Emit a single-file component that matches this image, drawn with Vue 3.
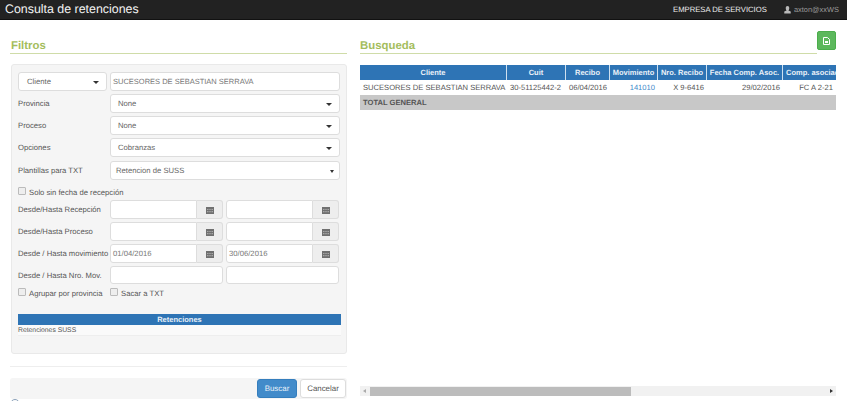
<script setup>
const rows = [
  { label: 'Provincia', value: 'None' },
  { label: 'Proceso', value: 'None' },
  { label: 'Opciones', value: 'Cobranzas' }
]
const dates = [
  { label: 'Desde/Hasta Recepción', a: '', b: '' },
  { label: 'Desde/Hasta Proceso', a: '', b: '' },
  { label: 'Desde / Hasta movimiento', a: '01/04/2016', b: '30/06/2016' }
]
const cols = [
  { name: 'Cliente', w: 147 },
  { name: 'Cuit', w: 59 },
  { name: 'Recibo', w: 44 },
  { name: 'Movimiento', w: 48 },
  { name: 'Nro. Recibo', w: 49 },
  { name: 'Fecha Comp. Asoc.', w: 76 },
  { name: 'Comp. asociado', w: 53 }
]
</script>

<template>
  <div class="page">
    <header class="topbar">
      <span class="title">Consulta de retenciones</span>
      <span class="company">EMPRESA DE SERVICIOS</span>
      <span class="user">
        <svg width="7" height="8" viewBox="0 0 8 9"><path d="M4 0C2.7 0 2 1 2 2.4 2 3.6 2.6 4.6 3 5L.3 6.3V8.5h7.4V6.3L5 5c.4-.4 1-1.4 1-2.6C6 1 5.3 0 4 0z" fill="#b8b8b8"/></svg>
        axton@xxWS
      </span>
    </header>
    <main class="content">
      <section class="left">
        <h2 class="heading">Filtros</h2>
        <div class="panel">
          <div class="row first">
            <div class="ctl pick">Cliente<i class="caret"></i></div>
            <div class="ctl grow plain upper">SUCESORES DE SEBASTIAN SERRAVA</div>
          </div>
          <div v-for="r in rows" :key="r.label" class="row">
            <label class="lab">{{ r.label }}</label>
            <div class="ctl grow sel">{{ r.value }}<i class="caret"></i></div>
          </div>
          <div class="row tpl">
            <label class="lab">Plantillas para TXT</label>
            <div class="ctl grow sel2">Retencion de SUSS<i class="caret small"></i></div>
          </div>
          <label class="check solo"><i class="box"></i>Solo sin fecha de recepción</label>
          <div v-for="d in dates" :key="d.label" class="row date">
            <label class="lab">{{ d.label }}</label>
            <div class="pair">
              <div v-for="v in [d.a, d.b]" class="dategroup">
                <div class="ctl dinput plain">{{ v }}</div>
                <div class="addon">
                  <svg width="8" height="8" viewBox="0 0 8 8"><path d="M0 1h8v7H0z" fill="#707070"/><path d="M1 3h1.5v1H1zM3.3 3h1.4v1H3.3zM5.5 3H7v1H5.5zM1 5h1.5v1.2H1zM3.3 5h1.4v1.2H3.3zM5.5 5H7v1.2H5.5z" fill="#a8a8a8"/></svg>
                </div>
              </div>
            </div>
          </div>
          <div class="row nro">
            <label class="lab">Desde / Hasta Nro. Mov.</label>
            <div class="pair">
              <div class="ctl half"></div>
              <div class="ctl half"></div>
            </div>
          </div>
          <div class="checks">
            <label class="check agr"><i class="box"></i>Agrupar por provincia</label>
            <label class="check"><i class="box"></i>Sacar a TXT</label>
          </div>
          <div class="ret">
            <div class="rethead">Retenciones</div>
            <div class="retrow">Retenciones SUSS</div>
          </div>
        </div>
        <hr class="sep" />
        <div class="actions">
          <button class="btn primary">Buscar</button>
          <button class="btn">Cancelar</button>
        </div>
        <div class="dot"></div>
      </section>
      <section class="right">
        <div class="headrow">
          <h2 class="heading busq">Busqueda</h2>
          <button class="xls">
            <svg width="7" height="8" viewBox="0 0 7 8"><path d="M.5.5h4l2 2v5h-6z" fill="none" stroke="#fff"/><path d="M2 4h3v2H2z" fill="#fff"/></svg>
          </button>
        </div>
        <div class="tablewrap">
          <div class="tr thead">
            <div v-for="c in cols" :key="c.name" class="th" :style="{ width: c.w + 'px' }">{{ c.name }}</div>
          </div>
          <div class="tr body">
            <div class="td" style="width:147px">SUCESORES DE SEBASTIAN SERRAVA</div>
            <div class="td" style="width:59px">30-51125442-2</div>
            <div class="td" style="width:44px">06/04/2016</div>
            <div class="td end link" style="width:48px">141010</div>
            <div class="td end" style="width:49px">X 9-6416</div>
            <div class="td end" style="width:76px">29/02/2016</div>
            <div class="td end" style="width:53px">FC A 2-21</div>
          </div>
          <div class="total">TOTAL GENERAL</div>
        </div>
        <div class="scroll">
          <span class="arr l"></span>
          <div class="thumb"></div>
          <span class="arr r"></span>
        </div>
      </section>
    </main>
  </div>
</template>

<style>
html, body { margin: 0; background: #fff; overflow: hidden; }
</style>

<style scoped>
.page { width: 847px; height: 401px; overflow: hidden; font-family: "Liberation Sans", Arial, sans-serif; font-size: 7.7px; color: #555; position: relative; text-rendering: geometricPrecision; }
.topbar { height: 19px; background: #222; border-bottom: 1px solid #111; display: flex; align-items: center; padding: 0 0 0 5px; color: #fff; }
.title { font-size: 12.4px; color: #f2f2f2; margin-right: auto; line-height: 15px; }
.company { font-size: 7.7px; color: #eee; width: 111px; }
.user { font-size: 7.4px; color: #999; width: 63px; display: flex; align-items: center; gap: 3px; white-space: nowrap; }
.content { display: flex; padding-left: 10px; }
.left { width: 337px; }
.right { width: 476px; margin-left: 13px; }
.heading { margin: 0; font-size: 11.4px; font-weight: bold; color: #a4bd5c; height: 14px; line-height: 14px; padding-top: 19px; border-bottom: 1px solid #cfdca8; padding-left: 1px; }
.busq { padding-left: 0; margin-right: 19px; }
.panel { box-sizing: border-box; margin-top: 10px; margin-left: 1px; width: 336px; height: 290px; background: #f5f5f5; border: 1px solid #e9e9e9; border-radius: 3px; padding: 7px 6px 0 6px; }
.row { display: flex; align-items: center; height: 19px; margin-bottom: 3px; }
.row.first { height: 19px; margin-bottom: 3px; gap: 3px; }
.row.tpl { margin-top: 4px; margin-bottom: 0; height: 19px; }
.row.date { height: 19px; margin-bottom: 3px; }
.row.nro { height: 18px; margin-bottom: 0; }
.lab { width: 92px; flex: none; color: #555; white-space: nowrap; }
.ctl { box-sizing: border-box; height: 100%; background: #fff; border: 1px solid #ddd; border-radius: 3px; display: flex; align-items: center; color: #666; position: relative; }
.pick { width: 89px; padding-left: 8px; flex: none; }
.grow { flex: 1; }
.plain { padding-left: 2px; color: #777; }
.upper { font-size: 7.5px; }
.sel { padding-left: 7px; }
.sel2 { padding-left: 5px; }
.caret { position: absolute; right: 7px; top: 8px; border: 3px solid transparent; border-top-color: #333; border-bottom: 0; }
.caret.small { border-width: 3px 2px 0; right: 5px; }
.check { display: flex; align-items: center; gap: 3px; color: #555; height: 12px; }
.solo { margin-top: 6px; margin-bottom: 2px; }
.box { width: 6px; height: 6px; border: 1px solid #bbb; border-radius: 1px; background: #eee; margin-bottom: 2px; }
.pair { display: flex; gap: 3px; flex: 1; height: 100%; }
.dategroup { display: flex; width: 113px; height: 100%; }
.dinput { flex: 1; border-radius: 3px 0 0 3px; }
.addon { width: 26px; box-sizing: border-box; background: #eee; border: 1px solid #ddd; border-left: 0; border-radius: 0 3px 3px 0; display: flex; align-items: center; justify-content: center; }
.half { width: 113px; }
.checks { display: flex; margin-top: 3px; }
.agr { width: 92px; }
.ret { margin-top: 15px; }
.rethead { height: 11px; line-height: 11px; background: #2e74b5; color: #e9f0f7; font-weight: bold; text-align: center; font-size: 7.5px; width: 323px; }
.retrow { height: 11px; line-height: 11px; background: #fafafa; border-bottom: 1px solid #eee; font-size: 6.8px; color: #555; width: 323px; box-sizing: border-box; }
.sep { margin: 12px 0 0 0; border: 0; border-top: 1px solid #eee; }
.actions { margin-top: 11px; background: #f5f5f5; height: 21px; display: flex; justify-content: flex-end; align-items: flex-start; gap: 3px; padding-right: 1px; border-radius: 3px; }
.btn { box-sizing: border-box; height: 19px; padding: 0; width: 46px; margin-top: 1px; background: #fff; border: 1px solid #ddd; border-radius: 3px; font: 7.9px "Liberation Sans", Arial, sans-serif; text-rendering: geometricPrecision; color: #555; }
.primary { width: 40px; background: #428bca; border-color: #357ebd; color: #eaf2f9; }
.dot { width: 10px; height: 10px; border-radius: 50%; border: 1px solid #8aa0b8; box-sizing: border-box; margin: 0; }
.headrow { position: relative; }
.xls { position: absolute; right: 0; top: 11px; width: 19px; height: 19px; padding: 0; background: #5cb85c; border: 1px solid #4cae4c; border-radius: 2px; display: flex; align-items: center; justify-content: center; }
.tablewrap { margin-top: 11px; width: 476px; }
.tr { display: flex; }
.thead { height: 15px; background: #2e74b5; }
.th { box-sizing: border-box; color: #eaf1f8; font-weight: bold; text-align: center; line-height: 15px; font-size: 7.5px; border-right: 1px solid #cfe0ef; white-space: nowrap; overflow: hidden; }
.th:last-child { border-right: 0; text-align: left; padding-left: 3px; }
.body { height: 15px; }
.td { box-sizing: border-box; font-size: 7.6px; line-height: 15px; white-space: nowrap; color: #555; padding-left: 3px; overflow: hidden; }
.td.end { text-align: right; padding: 0 3px 0 0; }
.link { color: #428bca; }
.total { height: 15px; line-height: 15px; background: #c8c8c8; font-size: 7.6px; font-weight: bold; color: #555; padding-left: 3px; }
.scroll { position: absolute; left: 360px; top: 386px; width: 476px; height: 10px; background: #f1f1f1; display: flex; align-items: center; }
.thumb { width: 261px; height: 9px; background: #bcbcbc; margin-left: 1px; }
.arr { width: 9px; display: flex; justify-content: center; }
.arr.l::before { content: ""; border: 2px solid transparent; border-right: 3px solid #aaa; border-left: 0; }
.arr.r { margin-left: auto; }
.arr.r::before { content: ""; border: 2px solid transparent; border-left: 3px solid #333; border-right: 0; }
</style>
